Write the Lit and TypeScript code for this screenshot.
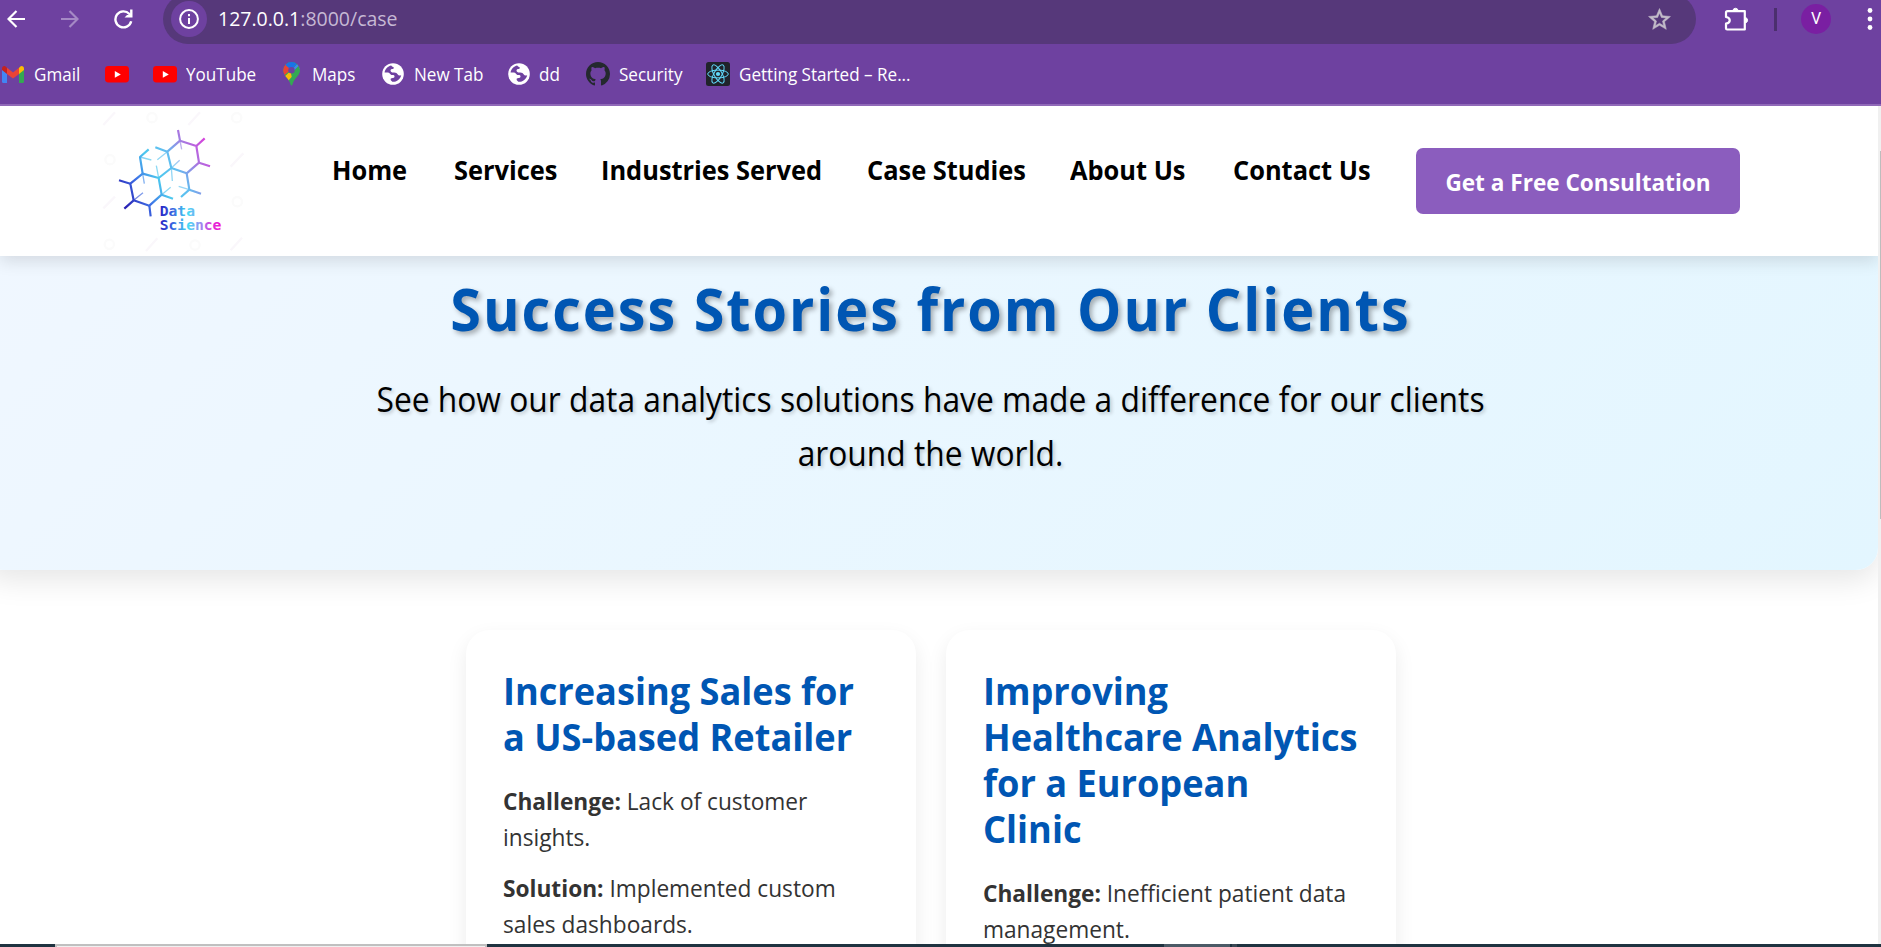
import { LitElement, html, css, svg } from "lit";
import { customElement } from "lit/decorators.js";

const gmail = html`<svg width="22" height="17" viewBox="0 0 22 17">
  <path d="M0 3v12.500q0 1.500 1.500 1.500H5V7z" fill="#4285f4" />
  <path d="M22 3v12.500q0 1.500-1.500 1.500H17V7z" fill="#34a853" />
  <path d="M17 2v6l5-4V2.600C22 .2 19.500-.8 17.800.9z" fill="#fbbc04" />
  <path d="M0 4l5 4V2L4.200.9C2.500-.8 0 .2 0 2.600z" fill="#c5221f" />
  <path d="M5 1.700l6 4.700 6-4.700V8l-6 4.600L5 8z" fill="#ea4335" />
</svg>`;

const youtube = html`<svg width="24" height="17" viewBox="0 0 24 17">
  <rect width="24" height="16.500" rx="3.400" fill="#f00" />
  <path d="M9.800 5v6.800l6-3.400z" fill="#fff" />
</svg>`;

const maps = html`<svg width="17" height="24" viewBox="0 0 17 24">
  <defs>
    <clipPath id="pin">
      <path d="M8.500 0a8.300 8.300 0 0 1 8.300 8.300c0 3.500-1.900 5.400-4 8-1.600 2-2.700 3.700-3.300 6.300-.3 1.200-1.700 1.200-2 0-.6-2.600-1.700-4.300-3.300-6.300-2.100-2.600-4-4.500-4-8A8.300 8.300 0 0 1 8.500 0z" />
    </clipPath>
  </defs>
  <g clip-path="url(#pin)">
    <rect width="17" height="24" fill="#34a853" />
    <path d="M0 16L8.500 8.300 12 11.500 4 20H0z" fill="#fbbc04" />
    <path d="M0 0v14.500L8.500 7 3 1z" fill="#ea4335" />
    <path d="M2.200 2.800L8.500 8.300 15 .500V0H2z" fill="#1a73e8" />
    <path d="M8.500 8.300L14.800 1.500 17 4v3l-8.500 4z" fill="#4285f4" />
    <path d="M8 11.500L16 3.500 17 9v3L9 16z" fill="#34a853" />
  </g>
  <circle cx="8.500" cy="8.200" r="3.200" fill="#6e41a0" />
</svg>`;

const globe = html`<svg width="22" height="22" viewBox="0 0 22 22">
  <circle cx="11" cy="11" r="10.800" fill="#fff" />
  <path d="M9.200 2.600C5.900 3.300 3.200 6 2.600 9.400h3.200c2 0 2 1.800 3.600 2.600h2c1.500.3 1.400 2.300.4 2.800-1.300.5-3.400.2-3.200 1.600.1 1.100 1.200 1.400 1.700 2.400 4.300.3 7.900-2.400 8.900-6.600-1.600.6-2.800.4-3.400-.6-.8-1.300-1.700-2-3.600-2-2.300.1-3.800-.5-3.700-2.300.1-1.200 1.200-1.300 2.200-1.400 1.700-.1 1.300-1.200.5-1.800-.8-.5-1.500-.5-2-1.500z" fill="#6e41a0" />
</svg>`;

const github = html`<svg width="24" height="24" viewBox="0 0 16 16">
  <path fill="#24292e" d="M8 0C3.580 0 0 3.580 0 8c0 3.540 2.290 6.530 5.470 7.590.4.070.55-.17.55-.38 0-.19-.01-.82-.01-1.490-2.010.37-2.530-.49-2.690-.94-.09-.23-.48-.94-.82-1.130-.28-.15-.68-.52-.01-.53.63-.01 1.080.58 1.230.82.72 1.210 1.870.87 2.330.66.070-.52.28-.87.51-1.070-1.780-.2-3.640-.89-3.640-3.950 0-.87.31-1.590.82-2.150-.08-.2-.36-1.020.08-2.120 0 0 .67-.21 2.200.82.64-.18 1.320-.27 2-.27s1.360.09 2 .27c1.530-1.040 2.200-.82 2.200-.82.44 1.100.16 1.920.08 2.120.51.56.82 1.270.82 2.150 0 3.070-1.870 3.750-3.650 3.950.29.25.54.73.54 1.480 0 1.070-.01 1.930-.01 2.200 0 .21.15.46.55.38A8.010 8.010 0 0 0 16 8c0-4.420-3.580-8-8-8z" />
</svg>`;

const react = html`<svg width="24" height="24" viewBox="0 0 24 24">
  <rect width="24" height="24" rx="2.500" fill="#20232a" />
  <g fill="none" stroke="#61dafb" stroke-width="1">
    ${[0, 60, 120].map((a) => svg`<ellipse cx="12" cy="12" rx="10.300" ry="3.900" transform="rotate(${a} 12 12)" />`)}
  </g>
  <circle cx="12" cy="12" r="2.100" fill="#61dafb" />
</svg>`;

const bookmarks = [
  { icon: gmail, label: "Gmail" },
  { icon: youtube, label: "" },
  { icon: youtube, label: "YouTube" },
  { icon: maps, label: "Maps" },
  { icon: globe, label: "New Tab" },
  { icon: globe, label: "dd" },
  { icon: github, label: "Security" },
  { icon: react, label: "Getting Started – Re..." },
];

@customElement("browser-chrome")
export class BrowserChrome extends LitElement {
  static styles = css`
    :host {
      display: block;
      height: 104px;
      overflow: hidden;
      background: #6e41a0;
      border-bottom: 2px solid #9069b8;
      color: #fff;
      font-family: "Open Sans", sans-serif;
    }
    svg {
      display: block;
      flex: none;
    }
    .bar {
      display: flex;
      align-items: center;
      height: 50px;
      margin-top: -6px;
    }
    .back { margin-left: 7px; }
    .forward { margin-left: 36px; }
    .reload { margin-left: 35px; }
    .omnibox {
      display: flex;
      align-items: center;
      box-sizing: border-box;
      width: 1533px;
      height: 50px;
      margin-left: 30px;
      padding: 0 25px 0 8px;
      border-radius: 25px;
      background: #56387a;
    }
    .info {
      display: grid;
      place-items: center;
      width: 36px;
      height: 36px;
      border-radius: 50%;
      background: #6e41a0;
    }
    .url {
      flex: 1;
      margin-left: 11px;
      font-size: 20px;
      line-height: 36px;
      color: #c6b9d4;
      transform: scaleX(0.975);
      transform-origin: left;
    }
    .host { color: #fff; }
    .puzzle { margin-left: 28px; }
    .divider {
      width: 3px;
      height: 23px;
      margin-left: 24px;
      background: #4b2f6d;
    }
    .avatar {
      width: 30px;
      height: 30px;
      margin-left: 24px;
      border-radius: 50%;
      background: #7a1fa2;
      font: 16px/30px Roboto, sans-serif;
      text-align: center;
    }
    .menu { margin-left: 36px; }
    .bookmarks {
      display: grid;
      grid-template-columns: 103px 48px 129.500px 99.500px 126px 78px 120px 240px;
      align-items: center;
      height: 24px;
      margin: 18px 0 0 2px;
      font-size: 18px;
      line-height: 24px;
    }
    .bookmark {
      display: flex;
      align-items: center;
      gap: 8.500px;
      white-space: nowrap;
    }
    .label {
      margin-top: -1px;
      transform: scaleX(0.948);
      transform-origin: left;
    }
    .bookmark:nth-child(4) { gap: 12px; }
    .bookmark:nth-child(1), .bookmark:nth-child(5) { gap: 9.500px; }
  `;

  render() {
    return html`
      <div class="bar">
        <svg class="back" width="18" height="18" viewBox="0 0 18 18" fill="none" stroke="#fff" stroke-width="2.200">
          <path d="M18 9H1.800M9.500 1L1.500 9l8 8" />
        </svg>
        <svg class="forward" width="18" height="18" viewBox="0 0 18 18" fill="none" stroke="#a589c5" stroke-width="2.200">
          <path d="M0 9h16.200M8.500 1l8 8-8 8" />
        </svg>
        <svg class="reload" width="19" height="20" viewBox="0 0 19 20">
          <path d="M17.200 12.300a8 8 0 1 1-1.800-7.300l1.600 1.800" fill="none" stroke="#fff" stroke-width="2.400" />
          <path d="M18.500.500V8.500H10.500L13 6.100h3.100V.500z" fill="#fff" />
        </svg>
        <div class="omnibox">
          <div class="info">
            <svg width="20" height="20" viewBox="0 0 20 20">
              <circle cx="10" cy="10" r="8.900" fill="none" stroke="#fff" stroke-width="2" />
              <path d="M10 9v6M10 5v2.200" stroke="#fff" stroke-width="2" />
            </svg>
          </div>
          <div class="url"><span class="host">127.0.0.1</span>:8000/case</div>
          <svg width="23" height="23" viewBox="1.500 1.500 21 21">
            <path fill="#c3bcc9" stroke="#c3bcc9" stroke-width=".5" d="M22 9.240l-7.190-.62L12 2 9.190 8.630 2 9.240l5.460 4.730L5.820 21 12 17.270 18.180 21l-1.630-7.030L22 9.240zM12 15.400l-3.760 2.270 1-4.280-3.320-2.880 4.380-.38L12 6.100l1.710 4.040 4.380.38-3.320 2.880 1 4.280L12 15.400z" />
          </svg>
        </div>
        <svg class="puzzle" width="26" height="26" viewBox="0 0 26 26">
          <path d="M3.500 5.200h17.300v18.300H3.200a1.300 1.300 0 0 1-1.200-1.300v-4.500c5-.8 5-6 0-6.700V6.700A1.500 1.500 0 0 1 3.500 5.200z" fill="none" stroke="#fff" stroke-width="2.200" stroke-linejoin="round" />
          <path d="M8.800 4.500a2.800 3 0 0 1 5.400 0zM21.500 11.500a2.800 2.800 0 0 1 0 5.400z" fill="#fff" stroke="#fff" />
        </svg>
        <div class="divider"></div>
        <div class="avatar">V</div>
        <svg class="menu" width="6" height="22" viewBox="0 0 6 22" fill="#fff">
          ${[2.500, 11, 19.500].map((y) => svg`<circle cx="3" cy=${y} r="2.400" />`)}
        </svg>
      </div>
      <div class="bookmarks">
        ${bookmarks.map((b) => html`<div class="bookmark">${b.icon}${b.label ? html`<span class="label">${b.label}</span>` : ""}</div>`)}
      </div>
    `;
  }
}

@customElement("site-logo")
export class SiteLogo extends LitElement {
  static styles = css`
    :host { display: block; }
    svg { display: block; }
    .word {
      font: bold 44px "DejaVu Sans Mono", monospace;
    }
  `;

  render() {
    const flecks = [[70, 90, 105, 52], [325, 90, 360, 52], [70, 340, 105, 305], [452, 215, 490, 175], [198, 468, 232, 430], [452, 466, 486, 428]];
    const rings = [[216, 68], [470, 68], [90, 194], [88, 448], [345, 450], [472, 320]];
    return html`<svg width="144" height="144" viewBox="60 45 432 432">
      <defs>
        <linearGradient id="net" gradientUnits="userSpaceOnUse" x1="125" y1="310" x2="385" y2="160">
          <stop offset="0" stop-color="#2a22b4" />
          <stop offset=".22" stop-color="#3d6fe6" />
          <stop offset=".42" stop-color="#4cc8ee" />
          <stop offset=".62" stop-color="#62bdf0" />
          <stop offset=".82" stop-color="#a877e0" />
          <stop offset="1" stop-color="#d445dc" />
        </linearGradient>
        <linearGradient id="word" gradientUnits="userSpaceOnUse" x1="240" y1="0" x2="424" y2="0">
          <stop offset="0" stop-color="#2722c4" />
          <stop offset=".2" stop-color="#3b62e0" />
          <stop offset=".46" stop-color="#45dcf5" />
          <stop offset=".66" stop-color="#9a8cf0" />
          <stop offset=".85" stop-color="#e030d8" />
          <stop offset="1" stop-color="#f010d0" />
        </linearGradient>
      </defs>
      <g fill="none" stroke="#faf7fb" stroke-width="7">
        ${flecks.map(([a, b, c, d]) => svg`<path d="M${a} ${b}L${c} ${d}" />`)}
        ${rings.map(([x, y]) => svg`<circle cx=${x} cy=${y} r="14" stroke="#fbfbfb" />`)}
      </g>
      <g fill="none" stroke="url(#net)" stroke-width="6.500" stroke-linejoin="round">
        <path d="M188 236L151 266 161 316 208 332 245 299 236 249z" />
        <path d="M262 170L300 137 349 153 357 203 320 235 274 219z" />
        <path d="M188 236L180 186 206 163M236 249L274 219M320 235L328 284 303 306" />
        <path d="M151 266L117 256M161 316L133 341M208 332L212 364M245 299L279 311M328 284L363 296" />
        <path d="M262 170L226 157M300 137L294 105M349 153L374 130M357 203L390 214" />
        <g stroke-width="4" opacity=".65">
          <path d="M188 236L193 266M161 316L189 293M236 249L229 212M274 219L277 258M274 219L299 196M245 299L272 277M262 170L232 194M300 137L305 163M180 186L214 195M328 284L296 274" />
        </g>
      </g>
      <g fill="url(#word)">
        <text class="word" x="239" y="362">Data</text>
        <text class="word" x="239" y="404">Science</text>
      </g>
    </svg>`;
  }
}

@customElement("site-header")
export class SiteHeader extends LitElement {
  static styles = css`
    :host {
      position: relative;
      z-index: 1;
      display: flex;
      align-items: flex-start;
      box-sizing: border-box;
      height: 150px;
      padding: 4px 0 0 100px;
      background: #fff;
      box-shadow: 0 5px 16px rgba(0, 0, 0, 0.12);
    }
    nav {
      display: grid;
      grid-template-columns: 121.500px 147.500px 266px 203px 162.500px 183px 324px;
      margin: 38px 0 0 88px;
      font: 700 27px/44px "Open Sans", sans-serif;
      color: #000;
      white-space: nowrap;
    }
    .label {
      display: block;
      transform: scaleX(0.941);
      transform-origin: left;
    }
    .cta {
      height: 66px;
      border-radius: 7px;
      background: #8b5dbe;
      color: #fff;
      font-size: 24px;
      line-height: 68px;
      text-align: center;
    }
    .cta .label { transform-origin: center; }
  `;

  render() {
    return html`
      <site-logo></site-logo>
      <nav>
        ${["Home", "Services", "Industries Served", "Case Studies", "About Us", "Contact Us"].map((t) => html`<span class="label">${t}</span>`)}
        <span class="cta"><span class="label">Get a Free Consultation</span></span>
      </nav>
    `;
  }
}

const stories = [
  {
    title: ["Increasing Sales for", "a US-based Retailer"],
    facts: [
      ["Challenge:", "Lack of customer", "insights."],
      ["Solution:", "Implemented custom", "sales dashboards."],
    ],
  },
  {
    title: ["Improving", "Healthcare Analytics", "for a European", "Clinic"],
    facts: [["Challenge:", "Inefficient patient data", "management."]],
  },
];

@customElement("app-root")
export class AppRoot extends LitElement {
  static styles = css`
    :host {
      display: flex;
      flex-direction: column;
      height: 947px;
      overflow: hidden;
      background: #fff;
      font-family: "Open Sans", sans-serif;
    }
    browser-chrome { flex: none; }
    .viewport {
      display: flex;
      flex: 1;
      min-height: 0;
    }
    .page {
      width: 1878px;
      overflow: hidden;
    }
    .hero {
      box-sizing: border-box;
      height: 314px;
      margin-left: -17px;
      padding-top: 17px;
      border-radius: 0 0 22px 22px;
      background: linear-gradient(135deg, #f0f7ff, #ebf7ff 35%, #e3f6ff);
      box-shadow: 0 10px 30px rgba(0, 0, 0, 0.1);
      text-align: center;
      white-space: nowrap;
    }
    h1 {
      margin: 0 0 28px;
      font-size: 59px;
      line-height: 71px;
      letter-spacing: 2.100px;
      color: #0056b3;
      text-shadow: 3px 3px 6px rgba(0, 0, 0, 0.3);
      transform: scaleX(0.945);
    }
    .lead {
      margin: 0;
      font-size: 34px;
      line-height: 54px;
      color: #000;
      text-shadow: 2px 2px 4px rgba(0, 0, 0, 0.2);
      transform: scaleX(0.934);
      transform-origin: center;
    }
    .stories {
      display: grid;
      grid-template-columns: 450px 450px;
      gap: 30px;
      height: 380px;
      padding: 60px 0 0 466px;
    }
    .card {
      box-sizing: border-box;
      padding: 37px;
      border-radius: 24px;
      background: #fff;
      box-shadow: 0 8px 20px rgba(0, 0, 0, 0.08);
      color: #333;
      white-space: nowrap;
    }
    h2 {
      margin: 0 0 24px;
      font-size: 38.400px;
      line-height: 46px;
      color: #0056b3;
      transform: scaleX(0.942);
      transform-origin: left;
    }
    .fact {
      margin: 0 0 14.700px;
      font-size: 24px;
      line-height: 36px;
      transform: scaleX(0.945);
      transform-origin: left;
    }
    .scroll {
      flex: 1;
      background: #f0f0f0;
    }
    .thumb {
      height: 368px;
      margin: 45px 0 0 2px;
      background: #bdbdbd;
    }
    .taskbar {
      display: flex;
      flex: none;
      height: 3px;
      background: #1f3340;
    }
    .search {
      box-sizing: border-box;
      width: 432px;
      margin-left: 55px;
      border: solid #c0c0c0;
      border-width: 2px 2px 0;
      background: #f0f0f0;
    }
    .task {
      width: 66px;
      margin-left: 677px;
      background: #4b5a66;
    }
    .edge {
      width: 5px;
      margin-left: 2px;
      background: #3a4854;
    }
  `;

  render() {
    return html`
      <browser-chrome></browser-chrome>
      <div class="viewport">
        <div class="page">
          <site-header></site-header>
          <section class="hero">
            <h1>Success Stories from Our Clients</h1>
            <p class="lead">
              See how our data analytics solutions have made a difference for our clients<br />around the world.
            </p>
          </section>
          <section class="stories">
            ${stories.map(
              (s) => html`<article class="card">
                <h2>${s.title.map((l, i) => html`${i ? html`<br />` : ""}${l}`)}</h2>
                ${s.facts.map(([k, a, b]) => html`<p class="fact"><strong>${k}</strong> ${a}<br />${b}</p>`)}
              </article>`,
            )}
          </section>
        </div>
        <div class="scroll"><div class="thumb"></div></div>
      </div>
      <div class="taskbar">
        <div class="search"></div>
        <div class="task"></div>
        <div class="edge"></div>
      </div>
    `;
  }
}
